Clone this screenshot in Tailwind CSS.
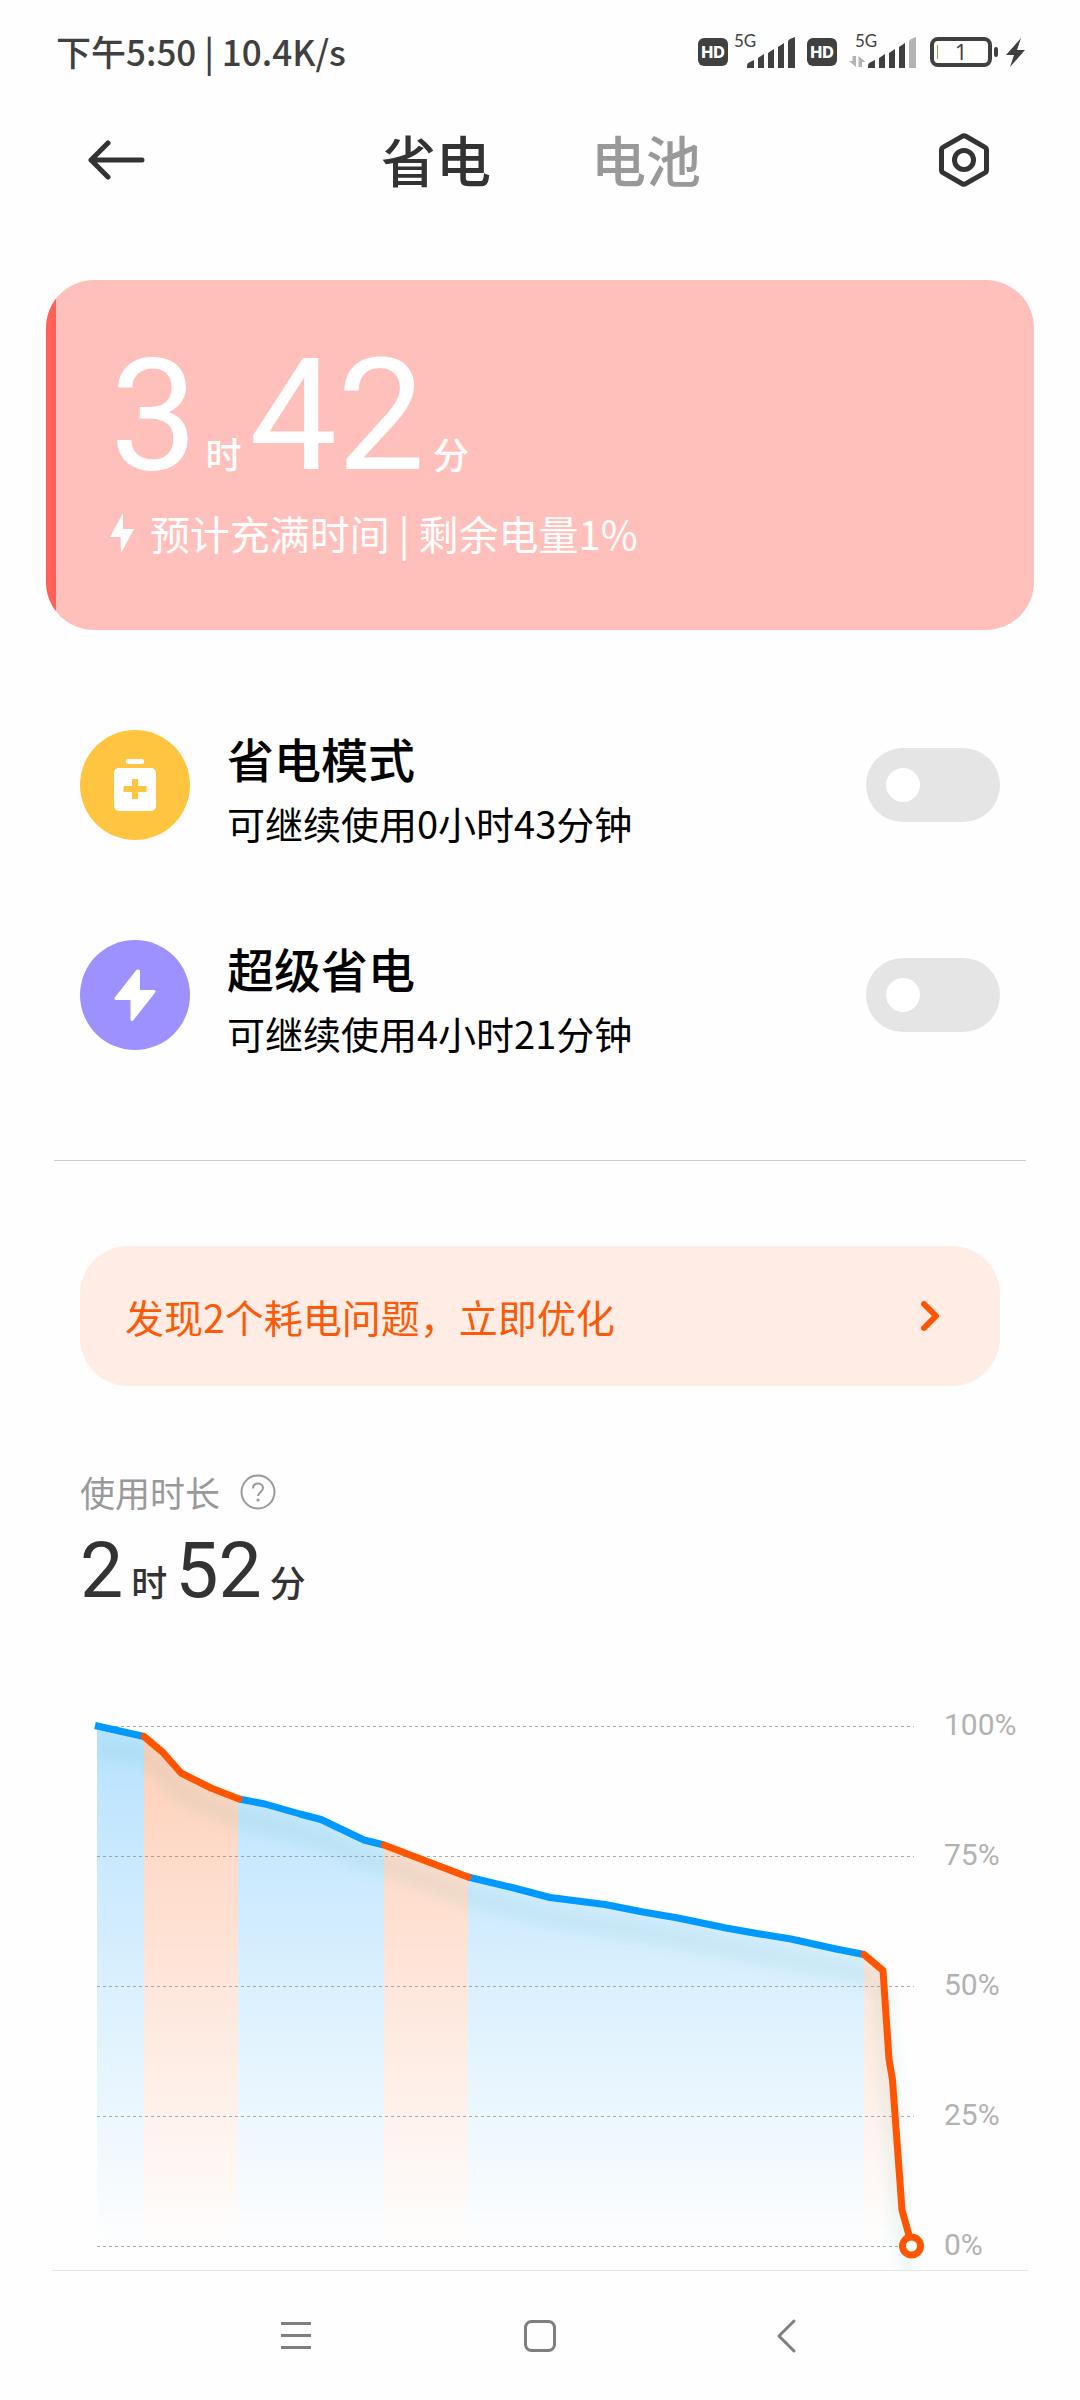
<!DOCTYPE html>
<html lang="zh-CN">
<head>
<meta charset="utf-8">
<meta name="viewport" content="width=device-width, initial-scale=1">
<title>省电与电池</title>
<script src="https://cdn.jsdelivr.net/npm/@tailwindcss/browser@4"></script>
</head>
<body class="bg-[#fefefe] text-black font-['Noto_Sans_CJK_SC',sans-serif]">
<div class="flex min-h-screen flex-col">

  <!-- Status bar -->
  <div class="flex h-[106px] items-center justify-between pl-14 pr-[54px] text-[#404040]">
    <div class="pb-1 text-[35px] leading-[40px] font-medium">下午5:50 | 10.4K/s</div>
    <svg class="h-[60px] w-[328px]" viewBox="698 23 328 60" fill="#404040" role="img" aria-label="信号与电量">
      <rect x="698" y="38" width="30" height="28" rx="6"/>
      <text x="713" y="58" font-family="Inter, sans-serif" font-size="16" font-weight="800" fill="#fff" text-anchor="middle">HD</text>
      <text x="734" y="47" font-family="Lato, sans-serif" font-size="17">5G</text>
      <path d="M747 66q0-3 3-4l4-2v8h-7zM758 68v-10l6-4v14zM768 68v-15l6-4v19zM778 68v-21l6-4v25zM788 68v-26q0-2 2-3l5-2v31z"/>
      <rect x="807" y="38" width="30" height="28" rx="6"/>
      <text x="822" y="58" font-family="Inter, sans-serif" font-size="16" font-weight="800" fill="#fff" text-anchor="middle">HD</text>
      <text x="855" y="47" font-family="Lato, sans-serif" font-size="17">5G</text>
      <path fill="#b3b3b3" d="M852.500 56h3.500v11l-7-6h3.500zM862 67h-3.500v-11l7 6H862z"/>
      <path d="M868 66q0-3 3-4l4-2v8h-7zM879 68v-10l6-4v14zM889 68v-15l6-4v19zM899 68v-21l6-4v25z"/>
      <path fill="#b3b3b3" d="M909 68v-26q0-2 2-3l5-2v31z"/>
      <rect x="932" y="39" width="58" height="26" rx="6" fill="none" stroke="#404040" stroke-width="4"/>
      <rect x="937" y="45" width="1" height="14" fill="#6abf40"/>
      <text x="961" y="60" font-family="'Open Sans', sans-serif" font-size="22" text-anchor="middle">1</text>
      <rect x="994" y="47" width="4" height="10" rx="2"/>
      <path d="M1021 38l-15 17h8l-4 12 15-17h-8z"/>
    </svg>
  </div>

  <!-- Header -->
  <header class="flex h-[108px] items-center justify-between px-[88px] text-[#333]">
    <button type="button" aria-label="返回">
      <svg class="h-11 w-[58px]" viewBox="0 0 58 44" fill="none" stroke="#333" stroke-width="5" stroke-linecap="round" stroke-linejoin="round"><path d="M54 22H3M20 5L3 22l17 17"/></svg>
    </button>
    <nav class="flex gap-[100px] pb-1 text-[55px] leading-[64px] font-medium">
      <a href="#saver" aria-current="page">省电</a>
      <a href="#battery" class="text-[#999]">电池</a>
    </nav>
    <button type="button" aria-label="设置">
      <svg class="size-14" viewBox="0 0 56 56" fill="none" stroke="#333" stroke-width="5" stroke-linejoin="round"><path d="M26.200 4.300q1.800-1 3.600 0l18.900 10.800q1.800 1 1.800 3v19.800q0 2-1.800 3L29.800 51.700q-1.800 1-3.600 0L7.300 40.900q-1.800-1-1.800-3V18.100q0-2 1.800-3z"/><circle cx="28" cy="28" r="9.500"/></svg>
    </button>
  </header>

  <main id="saver" class="flex-1">
    <!-- Charge card -->
    <section class="mx-[46px] mt-[66px] flex overflow-hidden rounded-[48px] bg-[#ffc0bb] text-white">
      <div class="bg-[#ff6059]" style="width:1%"></div>
      <div class="flex-1 pt-[49px] pb-[67px] pl-[54px]">
        <div class="flex items-baseline gap-2 text-[36px] leading-[40px] font-medium">
          <span class="font-[Roboto,sans-serif] text-[156px] leading-[174px] font-normal">3</span><span>时</span><span class="font-[Roboto,sans-serif] text-[156px] leading-[174px] font-normal">42</span><span>分</span>
        </div>
        <div class="flex items-center gap-4 text-[40px] leading-[60px]">
          <svg class="h-10 w-6" viewBox="0 0 24 40" fill="#fff"><path d="M13 0L0 24h10.500L11 40l13-24H13z"/></svg>
          <p>预计充满时间 | 剩余电量1%</p>
        </div>
      </div>
    </section>

    <!-- Saver modes -->
    <section class="mt-[100px] flex flex-col gap-[100px] px-20">
      <div class="flex items-center gap-[37px]">
        <svg class="size-[110px]" viewBox="0 0 110 110"><circle cx="55" cy="55" r="55" fill="#ffc540"/><rect x="46" y="29" width="18" height="5" rx="2" fill="#fff"/><rect x="34" y="38" width="42" height="43" rx="5" fill="#fff"/><path d="M55 49v20M43.500 59h23" stroke="#ffc540" stroke-width="6"/></svg>
        <label for="mode-saver" class="flex flex-1 flex-col gap-5">
          <span class="text-[47px] leading-[56px] font-medium">省电模式</span>
          <span class="text-[38px] leading-[34px]">可继续使用0小时43分钟</span>
        </label>
        <input id="mode-saver" type="checkbox" role="switch" class="flex h-[74px] w-[134px] appearance-none items-center rounded-full bg-[#e5e5e5] px-5 before:size-[34px] before:rounded-full before:bg-white before:content-['']">
      </div>
      <div class="flex items-center gap-[37px]">
        <svg class="size-[110px]" viewBox="0 0 110 110"><circle cx="55" cy="55" r="55" fill="#9c91ff"/><path d="M57.500 31L36 58.500h16V79.500L74 51.500H58.500V31z" fill="#fff" stroke="#fff" stroke-width="3" stroke-linejoin="round"/></svg>
        <label for="mode-ultra" class="flex flex-1 flex-col gap-5">
          <span class="text-[47px] leading-[56px] font-medium">超级省电</span>
          <span class="text-[38px] leading-[34px]">可继续使用4小时21分钟</span>
        </label>
        <input id="mode-ultra" type="checkbox" role="switch" class="flex h-[74px] w-[134px] appearance-none items-center rounded-full bg-[#e5e5e5] px-5 before:size-[34px] before:rounded-full before:bg-white before:content-['']">
      </div>
    </section>

    <hr class="mx-[54px] mt-[110px] border-t border-[#ccc]">

    <!-- Optimisation banner -->
    <div class="mt-[85px] px-20">
      <button type="button" class="flex h-[140px] w-full items-center justify-between rounded-[48px] bg-[#ffede5] pr-[58px] pl-[45px] text-[39px] leading-[60px] text-[#fc5908]">
        <span>发现2个耗电问题，立即优化</span>
        <svg class="h-9 w-6" viewBox="0 0 24 36" fill="none" stroke="#ff5500" stroke-width="6" stroke-linecap="round" stroke-linejoin="round"><path d="M6 6l12 12L6 30"/></svg>
      </button>
    </div>

    <!-- Screen-on time -->
    <section class="mt-[86px] px-20">
      <div class="flex items-center gap-5 text-[35px] leading-[40px] text-[#999]">
        <h2>使用时长</h2>
        <button type="button" aria-label="说明">
          <svg class="size-9" viewBox="0 0 36 36" fill="none" stroke="#999" stroke-width="2"><circle cx="18" cy="18" r="16.500"/><path d="M13 14.500c0-3.200 2.200-5 5-5s5 2 5 4.600c0 3.800-4.900 4-4.900 8"/><circle cx="18" cy="26" r="1.600" fill="#999" stroke="none"/></svg>
        </button>
      </div>
      <div class="mt-[15px] flex items-baseline gap-2 text-[36px] leading-[40px] font-medium text-[#333]">
        <span class="font-[Roboto,sans-serif] text-[77px] leading-[88px] font-normal">2</span><span>时</span><span class="font-[Roboto,sans-serif] text-[77px] leading-[88px] font-normal">52</span><span>分</span>
      </div>
    </section>

    <!-- Battery level chart -->
    <section class="mt-[95px] flex pr-[54px] pl-[90px]">
      <div class="flex-1">
        <svg class="h-auto w-full" viewBox="90 1710 840 560" fill="none" role="img" aria-label="电量曲线">
          <defs>
            <linearGradient id="blue" gradientUnits="userSpaceOnUse" x1="0" y1="1726" x2="0" y2="2246"><stop stop-color="#0099ff" stop-opacity=".28"/><stop offset="1" stop-color="#0099ff" stop-opacity="0"/></linearGradient>
            <linearGradient id="orange" gradientUnits="userSpaceOnUse" x1="0" y1="1726" x2="0" y2="2246"><stop stop-color="#ff5500" stop-opacity=".28"/><stop offset="1" stop-color="#ff5500" stop-opacity="0"/></linearGradient>
            <filter id="soft" filterUnits="userSpaceOnUse" x="80" y="1700" width="860" height="600"><feGaussianBlur stdDeviation="7"/></filter>
            <clipPath id="under"><path d="M97 1726H912V2270H97z"/></clipPath>
          </defs>
          <path fill="url(#blue)" d="M97 1726L144 1736V2246H97zM238 1799L265 1804L300 1814L321 1820L343 1830L364 1840L384 1845V2246H238zM468 1877L510 1887L550 1898L605 1905L643 1912L678 1918L702 1923L726 1928L757 1933L791 1939L836 1949L864 1954V2246H468z"/>
          <path fill="url(#orange)" d="M144 1736L163 1752L181 1773L211 1788L238 1799V2246H144zM384 1845L468 1877V2246H384zM864 1954L883 1970L889 2059L892 2080L902 2210L912 2246H864z"/>
          <path clip-path="url(#under)" filter="url(#soft)" stroke="#28a890" stroke-opacity=".11" stroke-width="14" d="M97 1748L144 1756L163 1772L181 1793L211 1808L239 1819L265 1824L321 1840L364 1860L384 1865L468 1897L550 1918L643 1932L726 1948L864 1974L883 1990L889 2079L902 2230L912 2280"/>
          <path stroke="#808080" stroke-opacity=".65" stroke-dasharray="3 3" d="M97 1726.500H914M97 1856.500H914M97 1986.500H914M97 2116.500H914M97 2246.500H914"/>
          <g stroke-width="7" stroke-linejoin="round">
            <path stroke="#0099ff" d="M95 1725.500L144 1736.500M239 1799L265 1804L300 1814L321 1819.500L343 1830L364 1840L384 1845M468 1877L510 1887L550 1897.500L605 1904.500L643 1912L678 1918L702 1923L726 1928L757 1933.500L791 1939L836 1949L864 1954.500"/>
            <path stroke="#ff5500" stroke-linecap="round" d="M144 1736.500L163 1752.500L181 1773L211 1788L239 1799M384 1845L468 1877M864 1954.500L883 1970.500L889 2059L892.500 2080L902 2210L912 2246"/>
          </g>
          <circle cx="911.500" cy="2246" r="9" fill="#fff" stroke="#ff5500" stroke-width="7"/>
        </svg>
      </div>
      <ul class="flex w-24 flex-col justify-between pb-[10px] pl-[14px] font-[Roboto,sans-serif] text-[30px] leading-[30px] text-[#b2b2b2]">
        <li>100%</li><li>75%</li><li>50%</li><li>25%</li><li>0%</li>
      </ul>
    </section>
  </main>

  <!-- System navigation -->
  <footer>
    <hr class="mx-[52px] border-t border-[#e5e5e5]">
    <div class="grid h-[129px] grid-cols-3 place-items-center px-[174px]">
      <button type="button" aria-label="最近任务"><svg class="size-9" viewBox="0 0 36 36" stroke="#7f7f7f" stroke-width="3"><path d="M3 5.500h30M3 17.500h30M3 29.500h30"/></svg></button>
      <button type="button" aria-label="主屏幕"><svg class="size-9" viewBox="0 0 36 36" fill="none" stroke="#7f7f7f" stroke-width="3"><rect x="3.500" y="3.500" width="29" height="29" rx="6"/></svg></button>
      <button type="button" aria-label="返回上一页"><svg class="size-9" viewBox="0 0 36 36" fill="none" stroke="#7f7f7f" stroke-width="3" stroke-linecap="round" stroke-linejoin="round"><path d="M28 3L13 18l15 15"/></svg></button>
    </div>
  </footer>
</div>
</body>
</html>
